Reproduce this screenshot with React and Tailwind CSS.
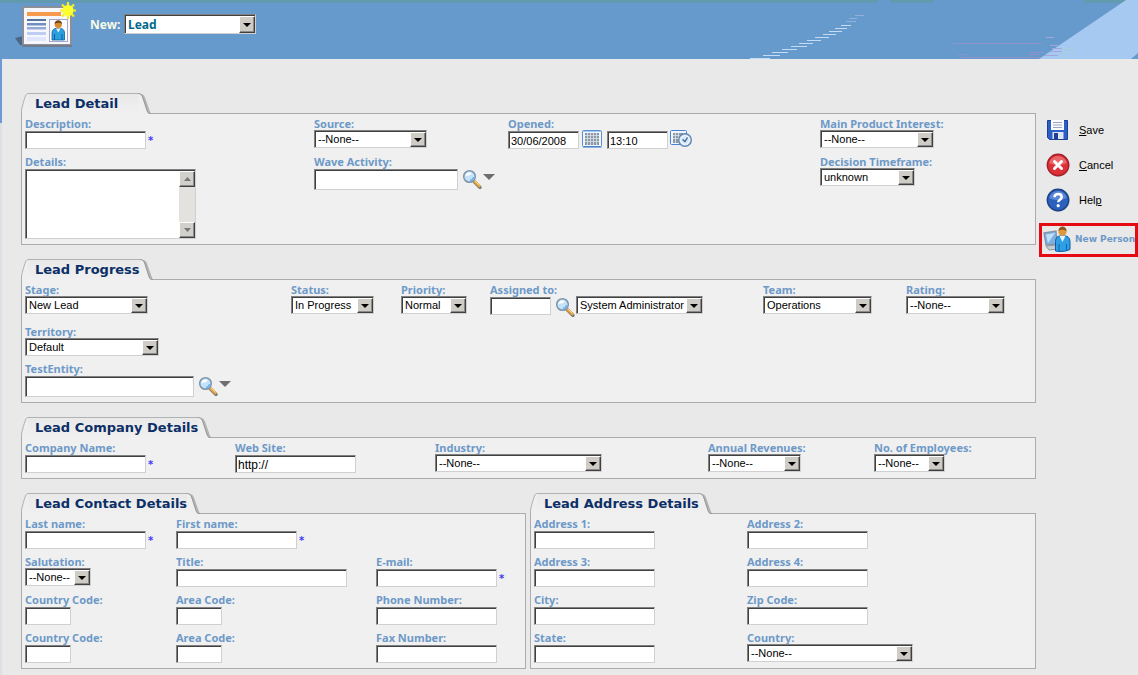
import React, { useId } from "react";

const uiFont = "font-['Liberation_Sans',Arial,sans-serif]";
const boldFont = "font-['Noto_Sans','Open_Sans',sans-serif] font-bold";
const headFont = "font-['DejaVu_Sans',sans-serif] font-bold";

const sunken =
  "border border-t-[#808080] border-l-[#808080] border-r-[#d0d0d0] border-b-[#d0d0d0] bg-white shadow-[inset_1px_1px_0_#404040]";

function Label({ htmlFor, children }) {
  return (
    <label htmlFor={htmlFor} className={`${boldFont} block h-[13px] text-[11px] leading-[13px] whitespace-nowrap text-[#6d99c8]`}>
      {children}
    </label>
  );
}

function TextInput({ id, width, tall, value, label, textSize = "text-[11px]" }) {
  return (
    <input
      id={id}
      type="text"
      aria-label={label}
      defaultValue={value}
      className={`${sunken} ${uiFont} ${width} ${textSize} ${tall ? "h-[21px]" : "h-[18px]"} mt-px block rounded-none pt-px pl-[2px] text-black outline-none`}
    />
  );
}

function Select({ id, width, value, label, large }) {
  return (
    <span className={`relative block ${width}`}>
      <select
        id={id}
        aria-label={label}
        className={`${sunken} block w-full appearance-none rounded-none pt-px pl-[3px] outline-none ${
          large ? `${boldFont} h-[20px] text-[12px] leading-[17px] text-[#006a8c]` : `${uiFont} h-[18px] text-[11px] leading-[15px] text-black`
        }`}
      >
        <option>{value}</option>
      </select>
      <span className="pointer-events-none absolute top-[2px] right-px bottom-px flex w-4 items-center justify-center border border-t-white border-l-white border-r-[#404040] border-b-[#404040] bg-[#cfccc6] shadow-[inset_-1px_-1px_0_#8a8a8a]">
        <svg width="8" height="4" viewBox="0 0 8 4" aria-hidden="true">
          <path d="M0 0h8L4 4z" fill="#000" />
        </svg>
      </span>
    </span>
  );
}

function Field({ label, type = "text", width, value, required, tall, textSize, children, className = "" }) {
  const id = useId();
  return (
    <div className={`min-w-0 ${className}`}>
      <Label htmlFor={id}>{label}</Label>
      <div className="flex">
        {type === "select" ? (
          <Select id={id} width={width} value={value} />
        ) : (
          <TextInput id={id} width={width} value={value} tall={tall} textSize={textSize} />
        )}
        {required && <span className="pt-[3px] pl-[2px] font-['DejaVu_Sans',sans-serif] text-[10px] leading-4 font-bold text-[#3a3af5]">*</span>}
        {children}
      </div>
    </div>
  );
}

function SearchIcon() {
  return (
    <svg width="20" height="20" viewBox="0 0 20 20" aria-hidden="true">
      <path d="M12 12.500l6 6" stroke="#777" strokeWidth="3.200" strokeLinecap="round" />
      <path d="M11.800 11.800l5.400 5.200" stroke="#e0a040" strokeWidth="2.800" strokeLinecap="round" />
      <path d="M12.600 11.800l4.600 4.200" stroke="#ffdd8a" strokeWidth="1" strokeLinecap="round" />
      <circle cx="7.500" cy="7.500" r="5.800" fill="#c4e2fa" stroke="#7d94ac" strokeWidth="1.500" />
      <path d="M3.500 7a4 4 0 0 1 4-3.600c1.800 0 2.600 1.400 1 2.400C6.600 7 5 6.400 3.500 7z" fill="#fff" />
      <path d="M8 11.500a4 4 0 0 0 3.500-3.500" stroke="#6bb0ee" strokeWidth="1.400" fill="none" />
    </svg>
  );
}

function SearchButton({ label }) {
  return (
    <button type="button" aria-label={label} className="mt-px ml-1 block h-5 w-5">
      <SearchIcon />
    </button>
  );
}

function MenuArrow({ label }) {
  return (
    <button type="button" aria-label={label} className="mt-[3px] ml-px flex h-3 w-3 items-center justify-center">
      <svg width="12" height="6" viewBox="0 0 12 6" aria-hidden="true">
        <path d="M0 0h12L6 6z" fill="#6e6e6e" />
      </svg>
    </button>
  );
}

function CalendarIcon() {
  return (
    <svg width="20" height="18" viewBox="0 0 20 18" aria-hidden="true">
      <rect x="0.5" y="0.5" width="19" height="16" rx="1" fill="#eef5fd" stroke="#5c90d6" />
      <path d="M1 1.500h18" stroke="#a5c9f3" strokeWidth="1" />
      <rect x="3" y="3" width="14" height="12" fill="#8f979f" />
      <path d="M3 5.500h14M3 8.500h14M3 11.500h14M5.500 3v12M8.500 3v12M11.500 3v12M14.500 3v12" stroke="#ccd8e4" strokeWidth="1" />
      <path d="M1 17h18.500" stroke="#3973c8" />
    </svg>
  );
}

function ClockIcon() {
  return (
    <svg width="22" height="18" viewBox="0 0 22 18" aria-hidden="true">
      <rect x="0.500" y="0.500" width="16" height="14" rx="1" fill="#eef5fd" stroke="#4a84d4" />
      <path d="M3 3h10v10H3z" fill="#8f979f" />
      <path d="M3 5.500h9M3 8.500h9M5.500 3v10M8.500 3v10" stroke="#ccd8e4" />
      <circle cx="15" cy="10" r="6.300" fill="#d4e7fb" stroke="#6487ad" strokeWidth="1.400" />
      <circle cx="15" cy="10" r="4.300" fill="none" stroke="#f4faff" strokeWidth="1" />
      <path d="M12.500 9.500l2.500 2L17.500 7.500" stroke="#45617f" strokeWidth="1.300" fill="none" />
    </svg>
  );
}

function Panel({ title, children }) {
  return (
    <section className="min-w-0">
      <div className="relative -mb-px flex h-[21px]">
        <svg width="7" height="21" viewBox="0 0 7 21" className="shrink-0" aria-hidden="true">
          <path d="M1 21v-4C2 12 3.500 7 5 3c.500-1.500 1-2 2-2v20z" fill="#efefef" />
          <path d="M.5 21v-4C1.500 12 3 7 4.500 3c.500-1.500 1.500-2.500 2.500-2.500" stroke="#aeb2b2" fill="none" />
        </svg>
        <h2 className={`${headFont} min-w-[110px] border-t border-[#b0b3b3] bg-linear-to-b from-[#e9e9e9] to-[#f0f0f0] pl-[7px] text-[13px] leading-[19px] whitespace-nowrap text-[#0b2f66]`}>
          {title}
        </h2>
        <svg width="13" height="21" viewBox="0 0 13 21" className="shrink-0" aria-hidden="true">
          <path d="M2 1c3 0 4 1 5 3.500L12.500 20H6z" fill="#b4b4b4" />
          <path d="M0 1c2.500 0 3.500 1 4.500 4L9 18c.500 1.500 1 2 2 3H0z" fill="#efefef" />
          <path d="M0 .5c3 0 4 1.500 5 4.500l4 12.500c.700 2 1.500 3 4 3" stroke="#979a9a" fill="none" />
        </svg>
      </div>
      <div className="flex flex-col gap-[6px] border border-[#a9adad] bg-[#f0f0f0] pt-[3px] pb-[5px] pl-[3px]">{children}</div>
    </section>
  );
}

function DetailsArea() {
  const id = useId();
  const btn =
    "flex h-4 w-4 items-center justify-center border border-t-white border-l-white border-r-[#404040] border-b-[#404040] bg-[#d2d0cc] shadow-[inset_-1px_-1px_0_#8a8a8a]";
  return (
    <div>
      <Label htmlFor={id}>Details:</Label>
      <div className={`${sunken} mt-px flex h-[70px] w-[171px] pt-px pl-px`}>
        <textarea id={id} className={`${uiFont} min-w-0 flex-1 resize-none overflow-hidden bg-transparent p-[2px] text-[11px] outline-none`} />
        <div className="flex w-4 flex-col justify-between bg-[#e3e2df]" aria-hidden="true">
          <span className={btn}>
            <svg width="7" height="4" viewBox="0 0 7 4"><path d="M0 4h7L3.500 0z" fill="#777" /></svg>
          </span>
          <span className={btn}>
            <svg width="7" height="4" viewBox="0 0 7 4"><path d="M0 0h7L3.500 4z" fill="#777" /></svg>
          </span>
        </div>
      </div>
    </div>
  );
}

function LeadLogo() {
  return (
    <svg width="62" height="46" viewBox="0 0 62 46" className="shrink-0" aria-hidden="true">
      <path d="M0 36l8-2v9H5z" fill="#4c6688" />
      <rect x="8" y="5" width="48" height="38" rx="1.500" fill="#f5f7fc" stroke="#8c8f98" strokeWidth="2" />
      <path d="M7 44h50" stroke="#6f7480" strokeWidth="1.500" />
      <rect x="12" y="10" width="34" height="4" fill="#f89a4c" />
      <rect x="12" y="17" width="19" height="2" fill="#56749c" />
      <rect x="12" y="21" width="19" height="2.500" fill="#6f8ec2" />
      <rect x="12" y="25" width="19" height="2.500" fill="#93a8d8" />
      <rect x="12" y="30" width="19" height="3" fill="#c0cdf2" />
      <rect x="12" y="35" width="19" height="4" fill="#e0e6fb" />
      <rect x="34.500" y="17.500" width="18" height="22" fill="#fbfcff" stroke="#a9a6ce" />
      <g transform="translate(1 0)">
        <path d="M36 38v-7c0-3 2-4.500 4-4.500h4.500c2 0 4 1.500 4 4.500v7z" fill="#2c9fdf" stroke="#0e5f9c" strokeWidth=".8" />
        <path d="M38.500 38v-6M46 38v-6" stroke="#0d5fa8" />
        <path d="M40 26.500l2.300 4 2.300-4z" fill="#e8f5ff" />
        <circle cx="42.300" cy="22.500" r="3.600" fill="#d98a2c" />
        <path d="M38.600 22c0-5 7.400-5 7.400 0-2-1.500-5-1.800-7.400 0z" fill="#6b4420" />
      </g>
      <path d="M53 0v17M45 8.500h16M47 2.500l12 12M59 2.500l-12 12" stroke="#f5ee20" strokeWidth="2.200" />
      <circle cx="53" cy="8.500" r="5.500" fill="#ffff2e" />
    </svg>
  );
}

function HeaderArt() {
  return (
    <svg width="438" height="59" viewBox="0 0 438 59" className="absolute top-0 right-0" aria-hidden="true">
      <path d="M178 0h12v3h-12zM234 0h150v3H234z" fill="#6699cc" />
      <path d="M426 0h12v59H339z" fill="#a6c9f1" />
      <path d="M438 53v6h-7z" fill="#6699cc" />
      <path
        d="M50 58.500h20M63 55.500h17M72 52.500h16M82 49.500h15M91 46.500h16M99 43.500h14M107 40.500h14M115 37.500h14M123 34.500h13M129 31.500h13M135 28.500h12M141 25.500h10"
        stroke="#c3dbf3"
      />
      <path d="M146 21.500h10M149 18.500h8M155 15.500h9" stroke="#8fb1dc" />
      <path d="M252 43.500h90M258 54.500h9M329 54.500h10M260 57.500h80M330 52.500h14" stroke="#8c93cb" />
      <path d="M344 55.500h14M352 48.500h10M350 45.500h8M346 37.500h8M350 51.500h12" stroke="#a4a5d8" />
      <path d="M362 48.500h12M360 52.500h16M362 56.500h8" stroke="#a8cfdc" />
    </svg>
  );
}

function SaveIcon() {
  return (
    <svg width="24" height="24" viewBox="0 0 24 24" aria-hidden="true">
      <path d="M1.500 2.500h20v19h-18l-2-2z" fill="#2c5fc6" stroke="#1c3f96" />
      <rect x="5" y="2" width="13" height="10" fill="#fafbff" />
      <path d="M7 4.500h9M7 7h9M7 9.500h9" stroke="#9aa3c4" />
      <rect x="6.500" y="14" width="11" height="7" fill="#dde5f5" />
      <rect x="8" y="15" width="4" height="6" fill="#1d3f92" />
    </svg>
  );
}

function CancelIcon() {
  return (
    <svg width="24" height="24" viewBox="0 0 24 24" aria-hidden="true">
      <circle cx="12.500" cy="12.500" r="11" fill="#8d8d8d" opacity=".6" />
      <circle cx="12" cy="12" r="10.700" fill="#dc3138" stroke="#a61f2a" strokeWidth="1.400" />
      <path d="M3 10a9.300 9.300 0 0 1 18 0c-5 2.500-12 3-18 0z" fill="#f28a8e" opacity=".6" />
      <path d="M8.500 8.500l7 7M15.500 8.500l-7 7" stroke="#fff" strokeWidth="3" strokeLinecap="round" />
    </svg>
  );
}

function HelpIcon() {
  return (
    <svg width="24" height="24" viewBox="0 0 24 24" aria-hidden="true">
      <circle cx="12.500" cy="12.500" r="11" fill="#8d8d8d" opacity=".6" />
      <circle cx="12" cy="12" r="10.700" fill="#2b60bd" stroke="#1c4288" strokeWidth="1.400" />
      <path d="M3 10a9.300 9.300 0 0 1 18 0c-5 2.500-12 3-18 0z" fill="#7ba4e4" opacity=".6" />
      <path d="M8.500 9.300c.2-4.600 7.200-4.300 7.200-.2 0 2.600-3.500 2.700-3.500 5.200" stroke="#fff" strokeWidth="2.500" fill="none" />
      <circle cx="12.200" cy="17.700" r="1.600" fill="#fff" />
    </svg>
  );
}

function PersonIcon() {
  return (
    <svg width="28" height="28" viewBox="0 0 28 28" className="shrink-0" aria-hidden="true">
      <path d="M1 7l12-2 1 13-11 1z" fill="#7fb2e2" stroke="#8794a5" strokeWidth="1.300" />
      <path d="M3 8.500l9-1.500-7 10z" fill="#bfe0fa" />
      <path d="M3 20l11-1 2 4-10 1z" fill="#c6ccd4" stroke="#8c95a0" />
      <path d="M12.500 25V15.500c0-3.500 2-5.500 4.500-5.500h5c2.500 0 5 2 5 5.500v8c-4 2-10 2.500-14.500 1.500z" fill="#2f9fe4" stroke="#0c5ca4" />
      <path d="M16 25v-7M23.500 24.500V18" stroke="#1062b2" />
      <path d="M16.500 10l3 6 3-6z" fill="#e6f5ff" />
      <circle cx="19.500" cy="5.500" r="4" fill="#e0963a" />
      <path d="M15.500 5c0-6 8-6 8 0-2.500-1.500-5.500-2-8 0z" fill="#8a5522" />
    </svg>
  );
}

function Action({ icon, children }) {
  return (
    <button type="button" className={`${uiFont} ml-[7px] flex h-6 items-center gap-[9px] text-[11px] text-black`}>
      {icon}
      <span>{children}</span>
    </button>
  );
}

export default function App() {
  return (
    <div className="flex min-h-screen flex-col bg-[#e9e9e9]">
      <header className="relative flex h-[59px] items-start bg-[#6699cc] pt-[2px] pl-[15px] shadow-[inset_0_3px_0_#629aaf]">
        <HeaderArt />
        <LeadLogo />
        <label htmlFor="entity" className={`${boldFont} mt-[13px] ml-[13px] w-[34px] text-[12px] leading-5 text-[#f7fbe8]`}>
          New:
        </label>
        <div className="mt-3">
          <Select id="entity" width="w-[132px]" value="Lead" large />
        </div>
      </header>

      <div className="flex flex-1 items-stretch">
        <div className="w-[2px] shrink-0 bg-[#dcdfe3]" aria-hidden="true">
          <div className="h-16 bg-[#6f98d6]" />
        </div>
        <main className="ml-[19px] flex min-w-0 flex-1 flex-col gap-[14px] pt-[34px] pb-[6px]">
          <Panel title="Lead Detail">
            <div className="grid grid-cols-[289fr_194fr_312fr_215fr] gap-y-[6px]">
              <Field label="Description:" width="w-[121px]" required />
              <Field label="Source:" type="select" width="w-[113px]" value="--None--" />
              <Field label="Opened:" width="w-[71px]" value="30/06/2008">
                <button type="button" aria-label="Pick date" className="ml-[3px] block h-[18px] w-5">
                  <CalendarIcon />
                </button>
                <div className="ml-[5px]">
                  <TextInput label="Time opened" width="w-[61px]" value="13:10" />
                </div>
                <button type="button" aria-label="Pick time" className="ml-[2px] block h-[18px] w-[22px]">
                  <ClockIcon />
                </button>
              </Field>
              <Field label="Main Product Interest:" type="select" width="w-[114px]" value="--None--" />
              <DetailsArea />
              <Field label="Wave Activity:" width="w-[144px]" tall className="col-span-2">
                <SearchButton label="Find wave activity" />
                <MenuArrow label="Wave activity options" />
              </Field>
              <Field label="Decision Timeframe:" type="select" width="w-[95px]" value="unknown" />
            </div>
          </Panel>

          <Panel title="Lead Progress">
            <div className="grid grid-cols-[266fr_110fr_89fr_273fr_143fr_129fr] pb-[2px]">
              <Field label="Stage:" type="select" width="w-[123px]" value="New Lead" />
              <Field label="Status:" type="select" width="w-[83px]" value="In Progress" />
              <Field label="Priority:" type="select" width="w-[66px]" value="Normal" />
              <Field label="Assigned to:" width="w-[61px]">
                <SearchButton label="Find user" />
                <div className="ml-px">
                  <Select label="Assigned user" width="w-[127px]" value="System Administrator" />
                </div>
              </Field>
              <Field label="Team:" type="select" width="w-[109px]" value="Operations" />
              <Field label="Rating:" type="select" width="w-[99px]" value="--None--" />
            </div>
            <Field label="Territory:" type="select" width="w-[134px]" value="Default" />
            <Field label="TestEntity:" width="w-[169px]" tall>
              <SearchButton label="Find test entity" />
              <MenuArrow label="Test entity options" />
            </Field>
          </Panel>

          <Panel title="Lead Company Details">
            <div className="grid grid-cols-[210fr_200fr_273fr_166fr_161fr]">
              <Field label="Company Name:" width="w-[121px]" required />
              <Field label="Web Site:" width="w-[121px]" value="http://" textSize="text-[12px]" />
              <Field label="Industry:" type="select" width="w-[167px]" value="--None--" />
              <Field label="Annual Revenues:" type="select" width="w-[93px]" value="--None--" />
              <Field label="No. of Employees:" type="select" width="w-[71px]" value="--None--" />
            </div>
          </Panel>

          <div className="grid grid-cols-[505fr_506fr] gap-1">
            <Panel title="Lead Contact Details">
              <div className="grid grid-cols-[151fr_200fr_149fr] gap-y-[6px]">
                <Field label="Last name:" width="w-[121px]" required />
                <Field label="First name:" width="w-[121px]" required className="col-span-2" />
                <Field label="Salutation:" type="select" width="w-[66px]" value="--None--" />
                <Field label="Title:" width="w-[171px]" />
                <Field label="E-mail:" width="w-[121px]" required />
                <Field label="Country Code:" width="w-[46px]" />
                <Field label="Area Code:" width="w-[46px]" />
                <Field label="Phone Number:" width="w-[121px]" />
                <Field label="Country Code:" width="w-[46px]" />
                <Field label="Area Code:" width="w-[46px]" />
                <Field label="Fax Number:" width="w-[121px]" />
              </div>
            </Panel>
            <Panel title="Lead Address Details">
              <div className="grid grid-cols-[213fr_288fr] gap-y-[6px]">
                <Field label="Address 1:" width="w-[121px]" />
                <Field label="Address 2:" width="w-[121px]" />
                <Field label="Address 3:" width="w-[121px]" />
                <Field label="Address 4:" width="w-[121px]" />
                <Field label="City:" width="w-[121px]" />
                <Field label="Zip Code:" width="w-[121px]" />
                <Field label="State:" width="w-[121px]" />
                <Field label="Country:" type="select" width="w-[166px]" value="--None--" />
              </div>
            </Panel>
          </div>
        </main>

        <aside className="ml-[3px] flex w-[99px] shrink-0 flex-col gap-[11px] pt-[59px]">
          <Action icon={<SaveIcon />}>
            <u>S</u>ave
          </Action>
          <Action icon={<CancelIcon />}>
            <u>C</u>ancel
          </Action>
          <Action icon={<HelpIcon />}>
            Hel<u>p</u>
          </Action>
          <button type="button" className={`${headFont} flex h-[34px] items-center gap-1 border-3 border-[#e60a12] pl-px text-[9px] whitespace-nowrap text-[#6d99c8]`}>
            <PersonIcon />
            New Person
          </button>
        </aside>
      </div>
    </div>
  );
}
